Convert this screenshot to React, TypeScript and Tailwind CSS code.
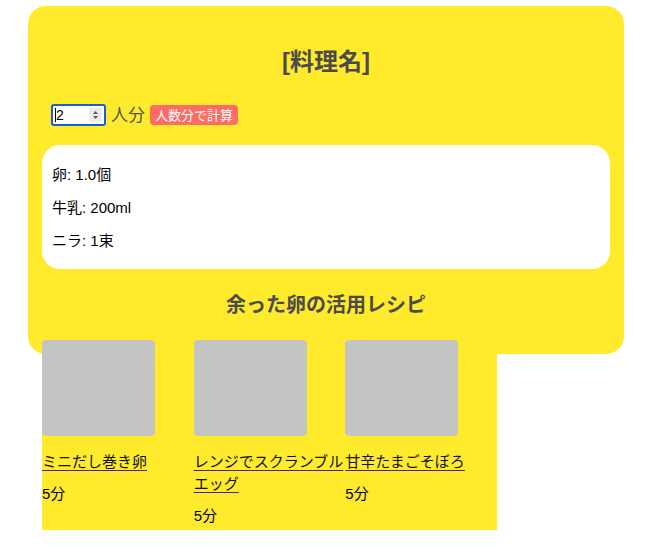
import React from "react";

const font = { fontFamily: '"Liberation Sans", "Noto Sans CJK JP", sans-serif' };

const recipes = [
  { name: "ミニだし巻き卵", time: "5分" },
  { name: "レンジでスクランブルエッグ", time: "5分" },
  { name: "甘辛たまごそぼろ", time: "5分" },
];

export default function App() {
  return (
    <div className="w-[650px] min-h-[557px] bg-white pt-[6px]" style={font}>
      <div className="ml-[28px] w-[596px] h-[348px] rounded-[18px] bg-[#ffeb2b] px-[14px] pt-[38px]">
        <h1 className="text-center text-[24px] leading-[36px] font-bold text-[#4b4b4b]">[料理名]</h1>
        <div className="mt-[24px] flex items-center h-[22px] pl-[9px]">
          <div className="relative w-[55px] h-[22px] rounded-[3px] border-2 border-[#1a5fcf] bg-white flex items-center">
            <span className="ml-[2px] w-px h-[14px] bg-black" />
            <span className="text-[14px] leading-none text-black">2</span>
            <div className="ml-auto mr-[2px] w-[13px] h-[14px] bg-[#ececec] flex items-center justify-center">
              <svg width="7" height="10" viewBox="0 0 7 10">
                <path d="M3.5 1 L6 4 L1 4 Z" fill="#5a5a5a" />
                <path d="M3.5 9 L6 6 L1 6 Z" fill="#5a5a5a" />
              </svg>
            </div>
          </div>
          <span className="ml-[5px] text-[17px] leading-none text-[#555555]">人分</span>
          <button className="ml-[5px] h-[20px] px-[5px] rounded-[4px] bg-[#fc6b65] text-white text-[13px] leading-none">
            人数分で計算
          </button>
        </div>
        <div className="mt-[19px] h-[124px] rounded-[18px] bg-white px-[10px] pt-[19px] flex flex-col gap-[11px]">
          <p className="text-[15px] leading-[22px] text-black">卵: 1.0個</p>
          <p className="text-[15px] leading-[22px] text-black">牛乳: 200ml</p>
          <p className="text-[15px] leading-[22px] text-black">ニラ: 1束</p>
        </div>
        <h2 className="mt-[21px] text-center text-[20px] leading-[30px] font-bold text-[#4b4b4b]">余った卵の活用レシピ</h2>
        <div className="mt-[20px] w-[455px] bg-[#ffeb2b] flex pb-[3px]">
          {recipes.map((r) => (
            <div key={r.name} className="w-1/3 flex flex-col">
              <div className="w-[113px] h-[96px] rounded-[4px] bg-[#c4c4c4]" />
              <a
                href="#"
                className="mt-[15px] text-[15px] leading-[22px] text-[#111111] underline decoration-[#551a8b] underline-offset-[3px]"
              >
                {r.name}
              </a>
              <p className="mt-[10px] text-[15px] leading-[22px] text-black">{r.time}</p>
            </div>
          ))}
        </div>
      </div>
    </div>
  );
}
